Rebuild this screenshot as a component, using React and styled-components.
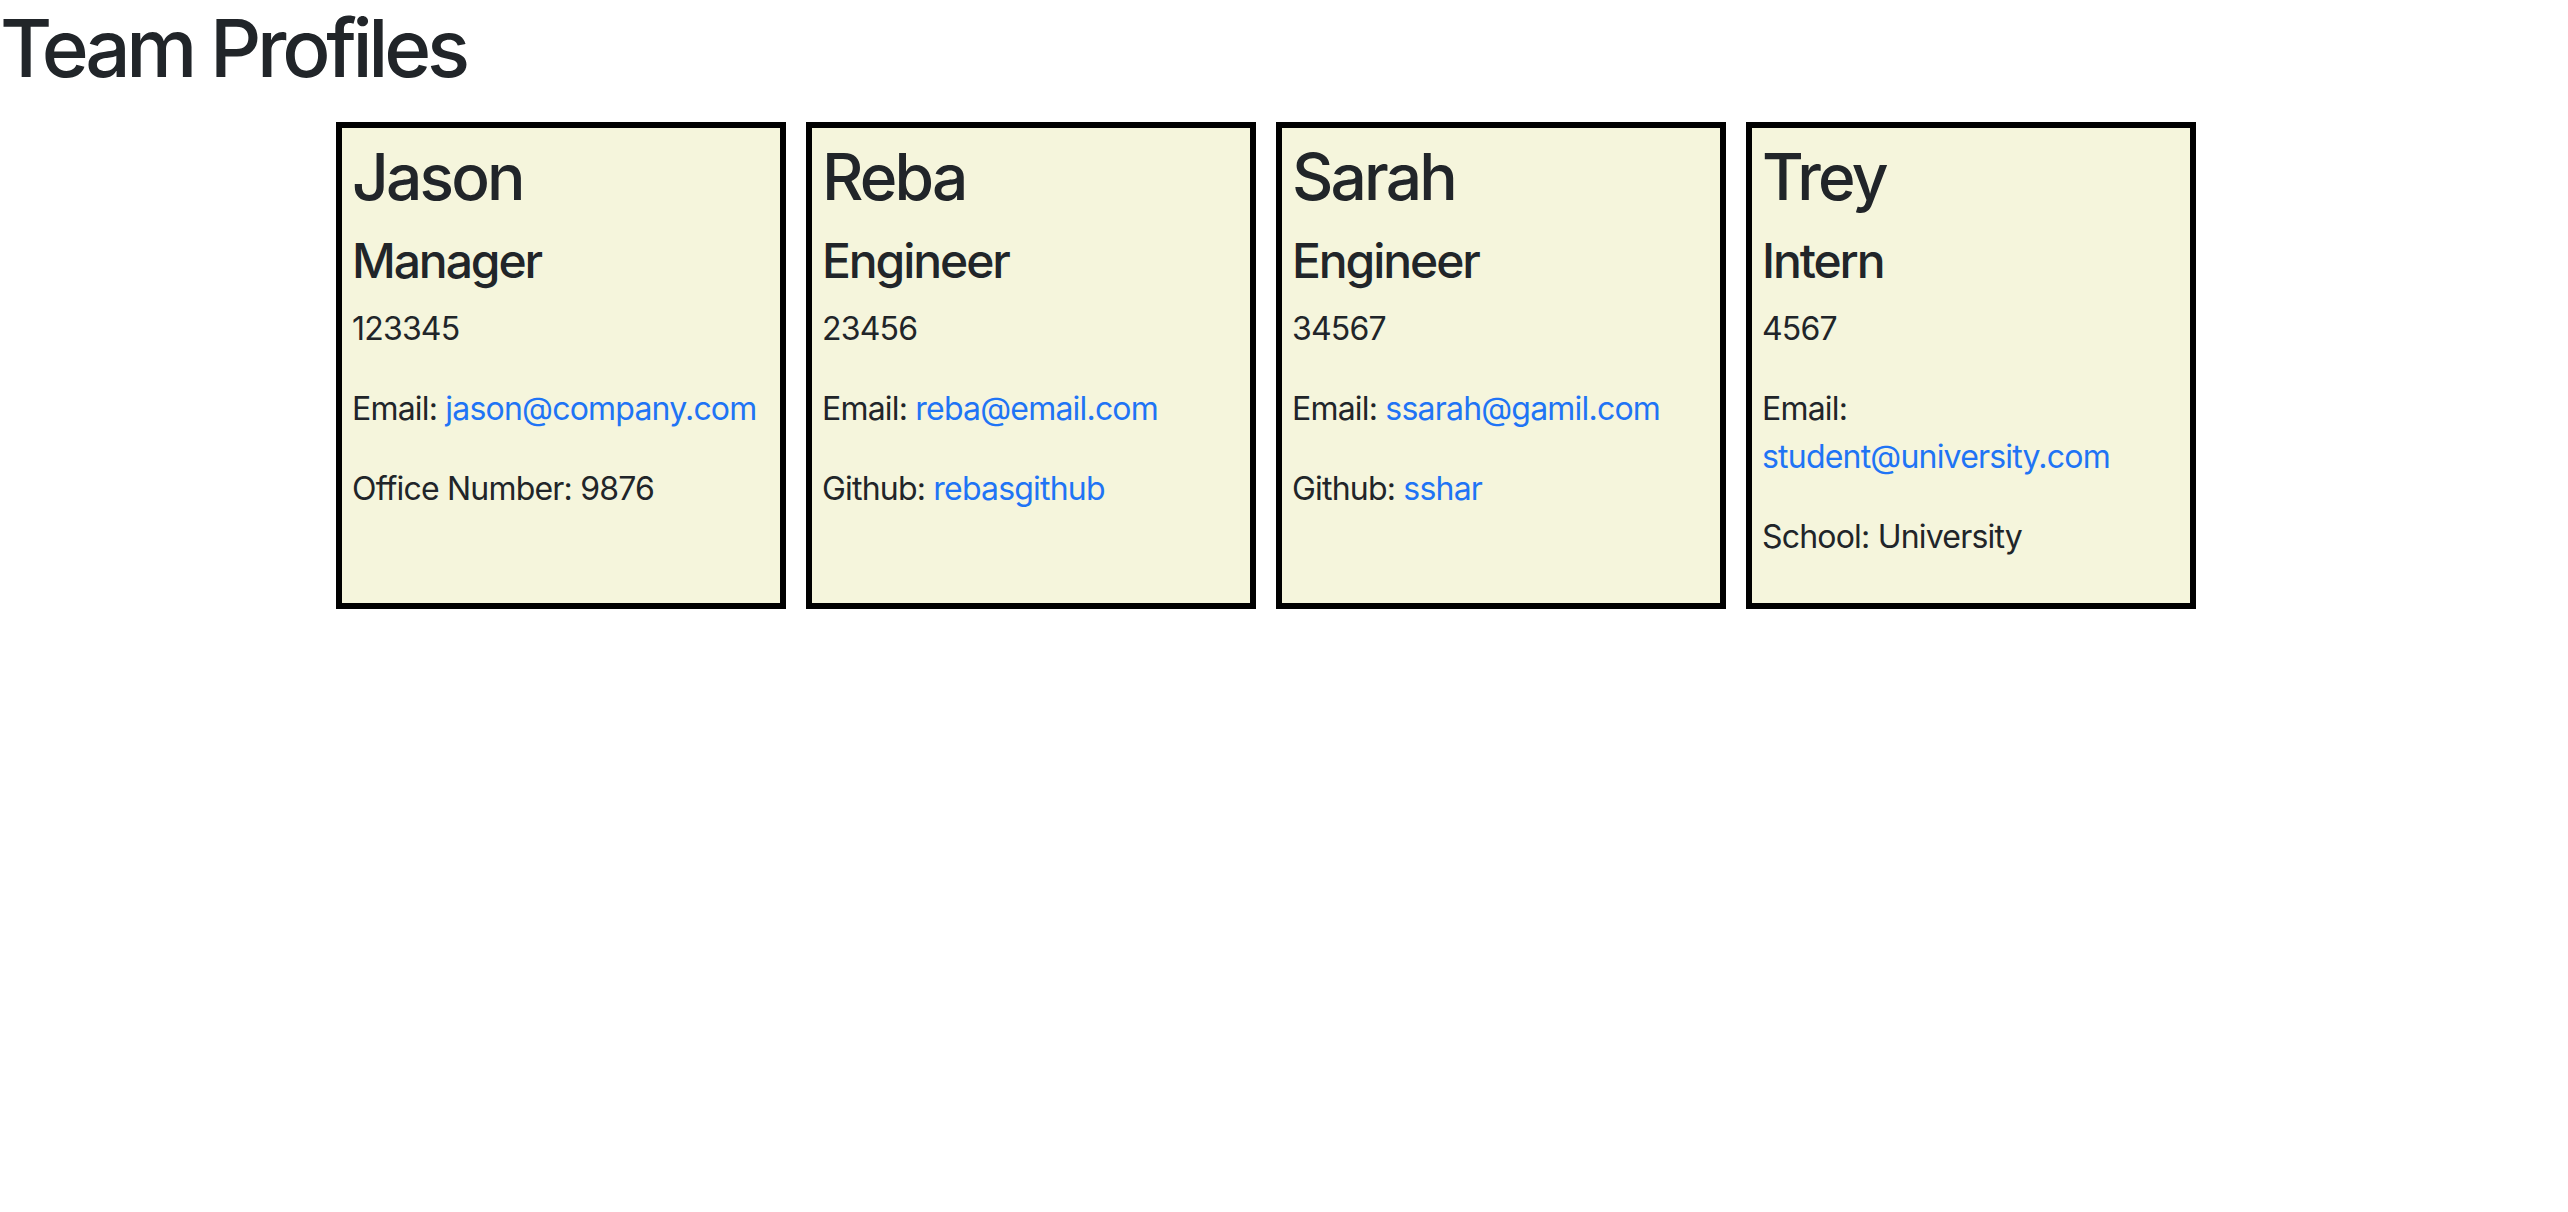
import React from 'react';
import styled, { createGlobalStyle } from 'styled-components';

const team = [
  {
    name: 'Jason',
    role: 'Manager',
    id: '123345',
    email: 'jason@company.com',
    extra: { label: 'Office Number', value: '9876' },
  },
  {
    name: 'Reba',
    role: 'Engineer',
    id: '23456',
    email: 'reba@email.com',
    extra: { label: 'Github', value: 'rebasgithub', link: true },
  },
  {
    name: 'Sarah',
    role: 'Engineer',
    id: '34567',
    email: 'ssarah@gamil.com',
    extra: { label: 'Github', value: 'sshar', link: true },
  },
  {
    name: 'Trey',
    role: 'Intern',
    id: '4567',
    email: 'student@university.com',
    extra: { label: 'School', value: 'University' },
  },
];

const GlobalStyle = createGlobalStyle`
  *, *::before, *::after { box-sizing: border-box; }
  body {
    margin: 0;
    background: #fff;
    color: #212529;
    font-family: Inter, "Noto Sans", "Liberation Sans", sans-serif;
    font-size: 32px;
    line-height: 1.5;
  }
`;

const Page = styled.div`
  display: flex;
  flex-direction: column;
`;

const Title = styled.h1`
  margin: 0 0 16px;
  font-size: 80px;
  font-weight: 500;
  line-height: 1.2;
  letter-spacing: -4.3px;
  color: #212529;
`;

const CardRow = styled.div`
  display: flex;
  align-items: stretch;
  gap: 20px;
  padding-left: 336px;
  margin-top: 10px;
`;

const Card = styled.section`
  width: 450px;
  padding: 11px 10px 10px;
  border: 6px solid #000;
  background: #f5f5dc;
`;

const Name = styled.h2`
  margin: 0 0 16px;
  font-size: 64px;
  font-weight: 500;
  line-height: 1.2;
  letter-spacing: -2.8px;
`;

const Role = styled.h4`
  margin: 0 0 16px;
  font-size: 48px;
  font-weight: 500;
  line-height: 1.2;
  letter-spacing: -2.1px;
`;

const Line = styled.p`
  margin: 0 0 32px;
  font-size: 32px;
  line-height: 1.5;
  letter-spacing: -0.8px;
`;

const Link = styled.a`
  color: #1f74f5;
  text-decoration: none;
`;

export default function App() {
  return (
    <Page>
      <GlobalStyle />
      <Title>Team Profiles</Title>
      <CardRow>
        {team.map(member => (
          <Card key={member.name}>
            <Name>{member.name}</Name>
            <Role>{member.role}</Role>
            <Line>{member.id}</Line>
            <Line>
              Email: <Link href={`mailto:${member.email}`}>{member.email}</Link>
            </Line>
            <Line>
              {member.extra.label}:{' '}
              {member.extra.link
                ? <Link href="#">{member.extra.value}</Link>
                : member.extra.value}
            </Line>
          </Card>
        ))}
      </CardRow>
    </Page>
  );
}
